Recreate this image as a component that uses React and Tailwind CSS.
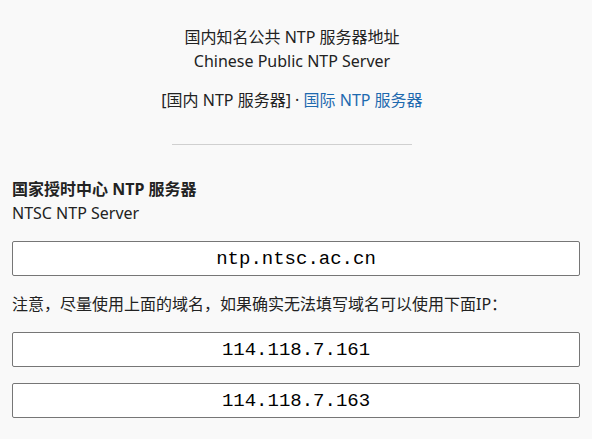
export default function App() {
  const font = { fontFamily: '"Noto Sans", "Noto Sans CJK SC", sans-serif' };
  return (
    <div className="min-h-[439px] bg-[#f9f9f9] text-[#222] text-[16px] leading-[24px] px-[12px] pt-[25px]" style={font}>
      <div className="text-center pr-[8px]">
        <div>国内知名公共 NTP 服务器地址</div>
        <div>Chinese Public NTP Server</div>
        <div className="mt-[15px]">
          [国内 NTP 服务器] · <span className="text-[#1e6aaf]">国际 NTP 服务器</span>
        </div>
        <div className="mx-auto mt-[32px] w-[240px] h-px bg-[#d0d0d0]" />
      </div>
      <div className="mt-[32px] font-bold">国家授时中心 NTP 服务器</div>
      <div>NTSC NTP Server</div>
      <div className="mt-[16px] h-[35px] border border-[#767676] rounded-[2px] bg-white flex items-center justify-center text-[19px] text-black font-['Liberation_Mono',monospace]">
        ntp.ntsc.ac.cn
      </div>
      <div className="mt-[16px]">注意，尽量使用上面的域名，如果确实无法填写域名可以使用下面IP：</div>
      <div className="mt-[16px] h-[35px] border border-[#767676] rounded-[2px] bg-white flex items-center justify-center text-[19px] text-black font-['Liberation_Mono',monospace]">
        114.118.7.161
      </div>
      <div className="mt-[16px] h-[35px] border border-[#767676] rounded-[2px] bg-white flex items-center justify-center text-[19px] text-black font-['Liberation_Mono',monospace]">
        114.118.7.163
      </div>
    </div>
  );
}
